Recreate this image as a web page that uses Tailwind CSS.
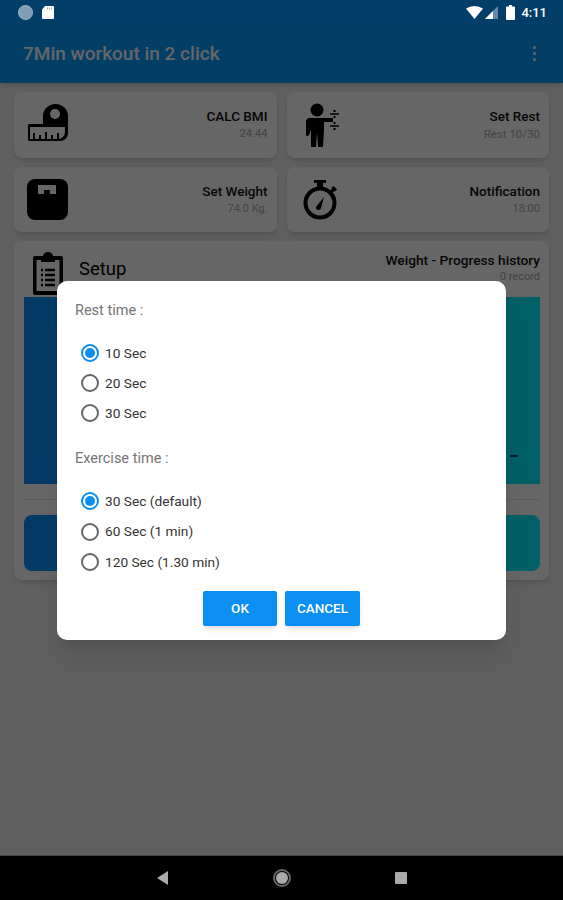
<!DOCTYPE html>
<html>

<head>
    <meta charset="UTF-8">
    <title>7Min workout</title>
    <script src="https://cdn.jsdelivr.net/npm/@tailwindcss/browser@4"></script>
</head>

<body class="bg-black">
    <div class="relative w-[563px] h-[900px] overflow-hidden flex flex-col bg-[#eeeeee] font-['Roboto',sans-serif]">
        <!-- status bar sits above the scrim -->
        <div class="relative z-20 h-6 shrink-0 bg-[#023e68] flex items-center pl-[18px] pr-4 text-white">
            <div class="w-[15px] h-[15px] rounded-full bg-[#7f9db5] border border-[#9db6c9]"></div>
            <svg class="ml-[8px]" width="14" height="15" viewBox="0 0 14 15">
                <path d="M4 1h8a1 1 0 0 1 1 1v11a1 1 0 0 1-1 1H2a1 1 0 0 1-1-1V4.500z" fill="#fff" />
                <path d="M6 2.500h1v2H6zM8 2.500h1v2H8zM10 2.500h1v2h-1z" fill="#9db4c6" />
            </svg>
            <div class="ml-auto flex items-center">
                <svg width="17" height="13" viewBox="0 0 17 13">
                    <path d="M0 2.500Q8.500-2.500 17 2.500L8.500 13z" fill="#fff" />
                </svg>
                <svg class="ml-[2px]" width="13" height="13" viewBox="0 0 13 13">
                    <path d="M13 0V13H0z" fill="#5f8aa8" />
                    <path d="M8 5V13H0z" fill="#fff" />
                </svg>
                <svg class="ml-[8px]" width="9" height="15" viewBox="0 0 9 15">
                    <path d="M3 0h3v1.500h2a1 1 0 0 1 1 1V14a1 1 0 0 1-1 1H1a1 1 0 0 1-1-1V2.500a1 1 0 0 1 1-1h2z" fill="#fff" />
                </svg>
                <span class="ml-[6px] text-[13px] font-medium leading-none">4:11</span>
            </div>
        </div>

        <!-- toolbar -->
        <div class="h-[59px] shrink-0 bg-[#059bff] flex items-center justify-between pl-[23px] pr-[27px] pt-[1px] shadow-md">
            <span class="text-[19px] font-medium text-white">7Min workout in 2 click</span>
            <div class="flex flex-col gap-[3px] -mt-[1px]">
                <div class="w-[3px] h-[3px] rounded-full bg-white"></div>
                <div class="w-[3px] h-[3px] rounded-full bg-white"></div>
                <div class="w-[3px] h-[3px] rounded-full bg-white"></div>
            </div>
        </div>

        <!-- main content -->
        <div class="flex-1 px-[14px] pt-[9px]">
            <div class="grid grid-cols-2 gap-x-[10px] gap-y-[9px]">
                <div class="h-[66px] bg-white rounded-lg shadow-md flex items-center justify-between pl-[13px] pr-[9px]">
                    <svg class="-mt-[4px]" width="41" height="38" viewBox="0 0 41 38">
                        <path d="M16 20V12a12.500 12 0 0 1 25 0v17a8 8 0 0 1-8 8H2a1 1 0 0 1-1-1V21a1 1 0 0 1 1-1z" fill="#000" />
                        <circle cx="28" cy="10" r="5" fill="#fff" />
                        <path d="M3 23H38v5a7 7 0 0 1-7 7H3z" fill="#fff" />
                        <path d="M7 29v6M13 31v4M19 28v7M25 31v4M31 29v6" stroke="#000" stroke-width="2" />
                    </svg>
                    <div class="text-right">
                        <div class="text-[13.500px] font-medium leading-4 text-[#111]">CALC BMI</div>
                        <div class="text-[11px] leading-4 mt-[2px] text-[#aaa]">24.44</div>
                    </div>
                </div>
                <div class="h-[66px] bg-white rounded-lg shadow-md flex items-center justify-between pl-[18px] pr-[9px]">
                    <svg width="34" height="44" viewBox="0 0 34 44">
                        <circle cx="12" cy="7" r="6.500" fill="#000" />
                        <path d="M4 15h24v4H19v8l-1 16a2.500 2.500 0 0 1-5 0l-1-13-1 13a2.500 2.500 0 0 1-5 0V27l-2 5a1.500 1.500 0 0 1-3-1V19a4 4 0 0 1 4-4z" fill="#000" />
                        <path d="M25 11h9M25 23h9" stroke="#000" stroke-width="1.500" />
                        <path d="M29.500 7v2M29.500 13v2M29.500 19v2M29.500 25v2" stroke="#000" stroke-width="2" />
                    </svg>
                    <div class="text-right">
                        <div class="text-[13.500px] font-medium leading-4 text-[#111]">Set Rest</div>
                        <div class="text-[11.500px] leading-4 mt-[2px] text-[#aaa]">Rest 10/30</div>
                    </div>
                </div>
                <div class="h-[65px] bg-white rounded-lg shadow-md flex items-center justify-between pl-[13px] pr-[9px]">
                    <svg width="41" height="41" viewBox="0 0 41 41">
                        <rect width="41" height="41" rx="8" fill="#000" />
                        <path d="M11 6h18v9h-6v-4h-6v4h-6z" fill="#fff" />
                    </svg>
                    <div class="text-right">
                        <div class="text-[13.500px] font-medium leading-4 text-[#111]">Set Weight</div>
                        <div class="text-[11px] leading-4 mt-[2px] text-[#aaa]">74.0 Kg.</div>
                    </div>
                </div>
                <div class="h-[65px] bg-white rounded-lg shadow-md flex items-center justify-between pl-[16px] pr-[9px]">
                    <svg width="36" height="40" viewBox="0 0 36 40">
                        <circle cx="17" cy="23" r="14.500" fill="none" stroke="#000" stroke-width="4" />
                        <path d="M11 0h12v3h-3v5h-6V3h-3z" fill="#000" />
                        <path d="M28 12l3-3" stroke="#000" stroke-width="3" />
                        <path d="M29.500 7l3.500 3.500" stroke="#000" stroke-width="3" />
                        <path d="M13 27l8-10-3 11a2.500 2.500 0 0 1-5-1z" fill="#000" />
                    </svg>
                    <div class="text-right">
                        <div class="text-[13.500px] font-medium leading-4 text-[#111]">Notification</div>
                        <div class="text-[11px] leading-4 mt-[2px] text-[#aaa]">18:00</div>
                    </div>
                </div>
            </div>

            <!-- setup card -->
            <div class="mt-[9px] h-[339px] bg-white rounded-lg shadow-md pl-[10px] pr-[9px] flex flex-col">
                <div class="h-[56px] flex justify-between">
                    <div class="flex items-start pl-2 pt-[11px]">
                        <svg width="32" height="43" viewBox="0 0 32 43">
                            <path d="M3 4h8a5 4 0 0 1 10 0h8a2 2 0 0 1 2 2v35a2 2 0 0 1-2 2H3a2 2 0 0 1-2-2V6a2 2 0 0 1 2-2z" fill="#000" />
                            <rect x="4.500" y="8" width="23" height="31" fill="#fff" />
                            <path d="M9 5h14v5H9z" fill="#000" />
                            <path d="M9 18h2M13 18h10M9 23h2M13 23h10M9 28h2M13 28h10M9 33h2M13 33h10" stroke="#000" stroke-width="2.500" />
                        </svg>
                        <span class="ml-[15px] mt-[5px] text-[18.500px] leading-6 text-black">Setup</span>
                    </div>
                    <div class="text-right pt-[11px]">
                        <div class="text-[13.700px] font-medium leading-4 text-[#111]">Weight - Progress history</div>
                        <div class="text-[11px] leading-4 mt-[1px] text-[#aaa]">0 record</div>
                    </div>
                </div>
                <div class="relative h-[187px] bg-gradient-to-r from-[#0a8fff] to-[#02f2ff]">
                    <div class="absolute left-[18px] top-[24px] w-px h-[135px] bg-white/10"></div>
                    <div class="absolute right-[22px] top-[158px] w-[8px] h-[1.500px] bg-black/70"></div>
                </div>
                <div class="mt-[15px] h-px bg-black/10"></div>
                <div class="mt-[15px] h-[56px] rounded-lg bg-gradient-to-r from-[#0a8fff] to-[#02f2ff]"></div>
            </div>
        </div>

        <!-- scrim -->
        <div class="absolute inset-0 z-10 bg-black/60"></div>

        <!-- dialog -->
        <div class="absolute z-10 left-[57px] top-[281px] w-[449px] h-[359px] bg-white rounded-[10px] shadow-xl pl-[18px] text-[#333]">
            <div class="pt-[21px] text-[14.500px] leading-[18px] text-[#757575]">Rest time :</div>
            <div class="mt-[18px] flex flex-col">
                <div class="h-[30px] flex items-center gap-[6px] text-[13.700px]">
                    <div class="w-[18px] h-[18px] ml-[6px] rounded-full border-2 border-[#0b8ff2] flex items-center justify-center">
                        <div class="w-[10px] h-[10px] rounded-full bg-[#0b8ff2]"></div>
                    </div>
                    <span>10 Sec</span>
                </div>
                <div class="h-[30px] flex items-center gap-[6px] text-[13.700px]">
                    <div class="w-[18px] h-[18px] ml-[6px] rounded-full border-2 border-[#666]"></div>
                    <span>20 Sec</span>
                </div>
                <div class="h-[30px] flex items-center gap-[6px] text-[13.700px]">
                    <div class="w-[18px] h-[18px] ml-[6px] rounded-full border-2 border-[#666]"></div>
                    <span>30 Sec</span>
                </div>
            </div>
            <div class="mt-[22px] text-[14.500px] leading-[18px] text-[#757575]">Exercise time :</div>
            <div class="mt-[18px] flex flex-col">
                <div class="h-[30.500px] flex items-center gap-[6px] text-[13.700px]">
                    <div class="w-[18px] h-[18px] ml-[6px] rounded-full border-2 border-[#0b8ff2] flex items-center justify-center">
                        <div class="w-[10px] h-[10px] rounded-full bg-[#0b8ff2]"></div>
                    </div>
                    <span>30 Sec (default)</span>
                </div>
                <div class="h-[30.500px] flex items-center gap-[6px] text-[13.700px]">
                    <div class="w-[18px] h-[18px] ml-[6px] rounded-full border-2 border-[#666]"></div>
                    <span>60 Sec (1 min)</span>
                </div>
                <div class="h-[30.500px] flex items-center gap-[6px] text-[13.700px]">
                    <div class="w-[18px] h-[18px] ml-[6px] rounded-full border-2 border-[#666]"></div>
                    <span>120 Sec (1.30 min)</span>
                </div>
            </div>
            <div class="mt-[13px] ml-[128px] flex gap-2">
                <div class="w-[74px] h-[35px] bg-[#0b8ff2] shadow-md rounded-[2px] flex items-center justify-center text-[13.500px] font-medium text-white">OK</div>
                <div class="w-[75px] h-[35px] bg-[#0b8ff2] shadow-md rounded-[2px] flex items-center justify-center text-[13.500px] font-medium text-white">CANCEL</div>
            </div>
        </div>

        <!-- nav bar -->
        <div class="relative z-20 h-[45px] shrink-0 bg-black border-t border-[#444] flex items-center text-[#aaa]">
            <svg class="ml-[156px]" width="13" height="14" viewBox="0 0 13 14">
                <path d="M12 0V14L1 7z" fill="#aaa" />
            </svg>
            <div class="ml-[104px] w-[18px] h-[18px] rounded-full border-2 border-[#666] flex items-center justify-center">
                <div class="w-[12px] h-[12px] rounded-full bg-[#aaa]"></div>
            </div>
            <div class="ml-[104px] w-[12px] h-[12px] rounded-[1px] bg-[#aaa]"></div>
        </div>
    </div>
</body>

</html>
